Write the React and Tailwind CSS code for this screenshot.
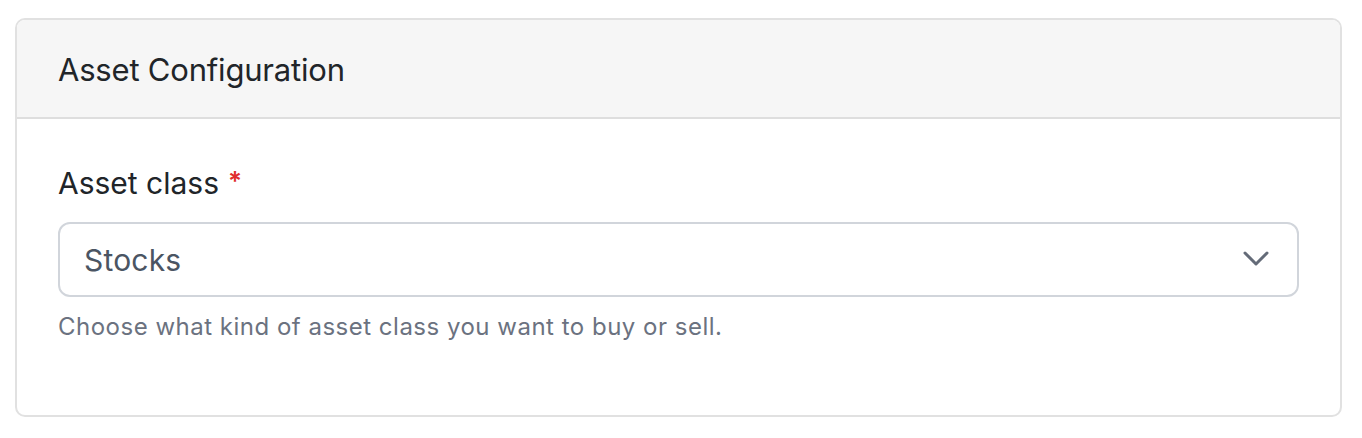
import React from "react";

const App = () => {
  return (
    <div className="w-[1362px] h-[438px] bg-white pt-[18px] pl-[15px] font-['Inter',sans-serif]">
      <div className="w-[1327px] border-2 border-[#e1e1e1] rounded-[10px] overflow-hidden h-[399px] flex flex-col">
        <div className="bg-[#f6f6f6] border-b-2 border-[#dedede] h-[99px] flex items-center px-[41px] pt-[3px]">
          <h2 className="text-[31px] text-[#212529] tracking-[-0.2px]">Asset Configuration</h2>
        </div>
        <div className="px-[41px] pt-[46px] flex flex-col">
          <label className="text-[30px] text-[#212529] leading-[36px] flex items-start">
            Asset class
            <span className="ml-[9px] mt-[-2px] text-[26px] font-semibold text-[#e02d2d]">*</span>
          </label>
          <div className="mt-[21px] h-[75px] border-2 border-[#d1d5db] rounded-[12px] flex items-center justify-between pl-[24px] pr-[28px]">
            <span className="text-[30px] text-[#4b5563] tracking-[0.2px] mt-[2px]">Stocks</span>
            <svg width="26" height="16" viewBox="0 0 26 16" fill="none" stroke="#646b78" strokeWidth="3" strokeLinecap="round" strokeLinejoin="round" className="mt-[-2px]">
              <path d="M2 2l11 11 11-11" />
            </svg>
          </div>
          <p className="mt-[12px] text-[24px] text-[#6b7280] tracking-[0.5px]">Choose what kind of asset class you want to buy or sell.</p>
        </div>
      </div>
    </div>
  );
};

export default App;
